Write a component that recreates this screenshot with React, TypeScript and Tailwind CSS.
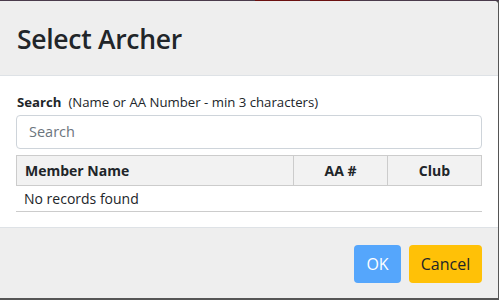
import React from "react";

export default function App() {
  const font = { fontFamily: '"Open Sans", "Noto Sans", sans-serif' };
  return (
    <div className="w-[499px] h-[300px] bg-[#555555] overflow-hidden flex flex-col" style={font}>
      <div className="h-[1px] bg-[#4a3b4c] shrink-0 flex">
        <div className="ml-[255px] w-[45px] h-[1px] bg-[#6b1010]" />
        <div className="ml-[10px] w-[40px] h-[1px] bg-[#6b1010]" />
      </div>
      <div className="w-[498px] h-[297px] bg-white rounded-tr-[4px] overflow-hidden flex flex-col text-[#212529]">
        <div className="h-[75px] shrink-0 bg-[#eeeeee] border-b border-[#dee2e6] flex items-center px-[17px] pt-[2px]">
          <h1 className="text-[26.5px] font-semibold leading-none tracking-[-0.3px]">Select Archer</h1>
        </div>
        <div className="flex-1 px-[16px] pt-[17px]">
          <div className="text-[13.2px] leading-[18px] pl-[1px]">
            <span className="font-bold">Search</span>
            <span className="ml-[7px]">(Name or AA Number - min 3 characters)</span>
          </div>
          <div className="mt-[4px] h-[34px] border border-[#ced4da] rounded-[4px] flex items-center px-[12px]">
            <span className="text-[14.5px] text-[#6c757d]">Search</span>
          </div>
          <div className="mt-[6px] w-[466px]">
            <div className="flex h-[31px] bg-[#f2f2f2] border border-[#cccccc] text-[14px] font-bold">
              <div className="w-[277px] flex items-center px-[8px] border-r border-[#cccccc]">Member Name</div>
              <div className="w-[94px] flex items-center justify-center border-r border-[#cccccc]">AA #</div>
              <div className="flex-1 flex items-center justify-center">Club</div>
            </div>
            <div className="h-[26px] flex items-center px-[8px] border-b border-[#cccccc] text-[14px]">
              No records found
            </div>
          </div>
        </div>
        <div className="h-[71px] shrink-0 bg-[#eeeeee] border-t border-[#dee2e6] flex items-start justify-end pr-[16px] pt-[17px] gap-[8px]">
          <button className="h-[38px] w-[47px] rounded-[4px] bg-[#55a6fc] text-white text-[16px]">OK</button>
          <button className="h-[38px] w-[73px] rounded-[4px] bg-[#ffc107] text-[#212529] text-[16px]">Cancel</button>
        </div>
      </div>
    </div>
  );
}
